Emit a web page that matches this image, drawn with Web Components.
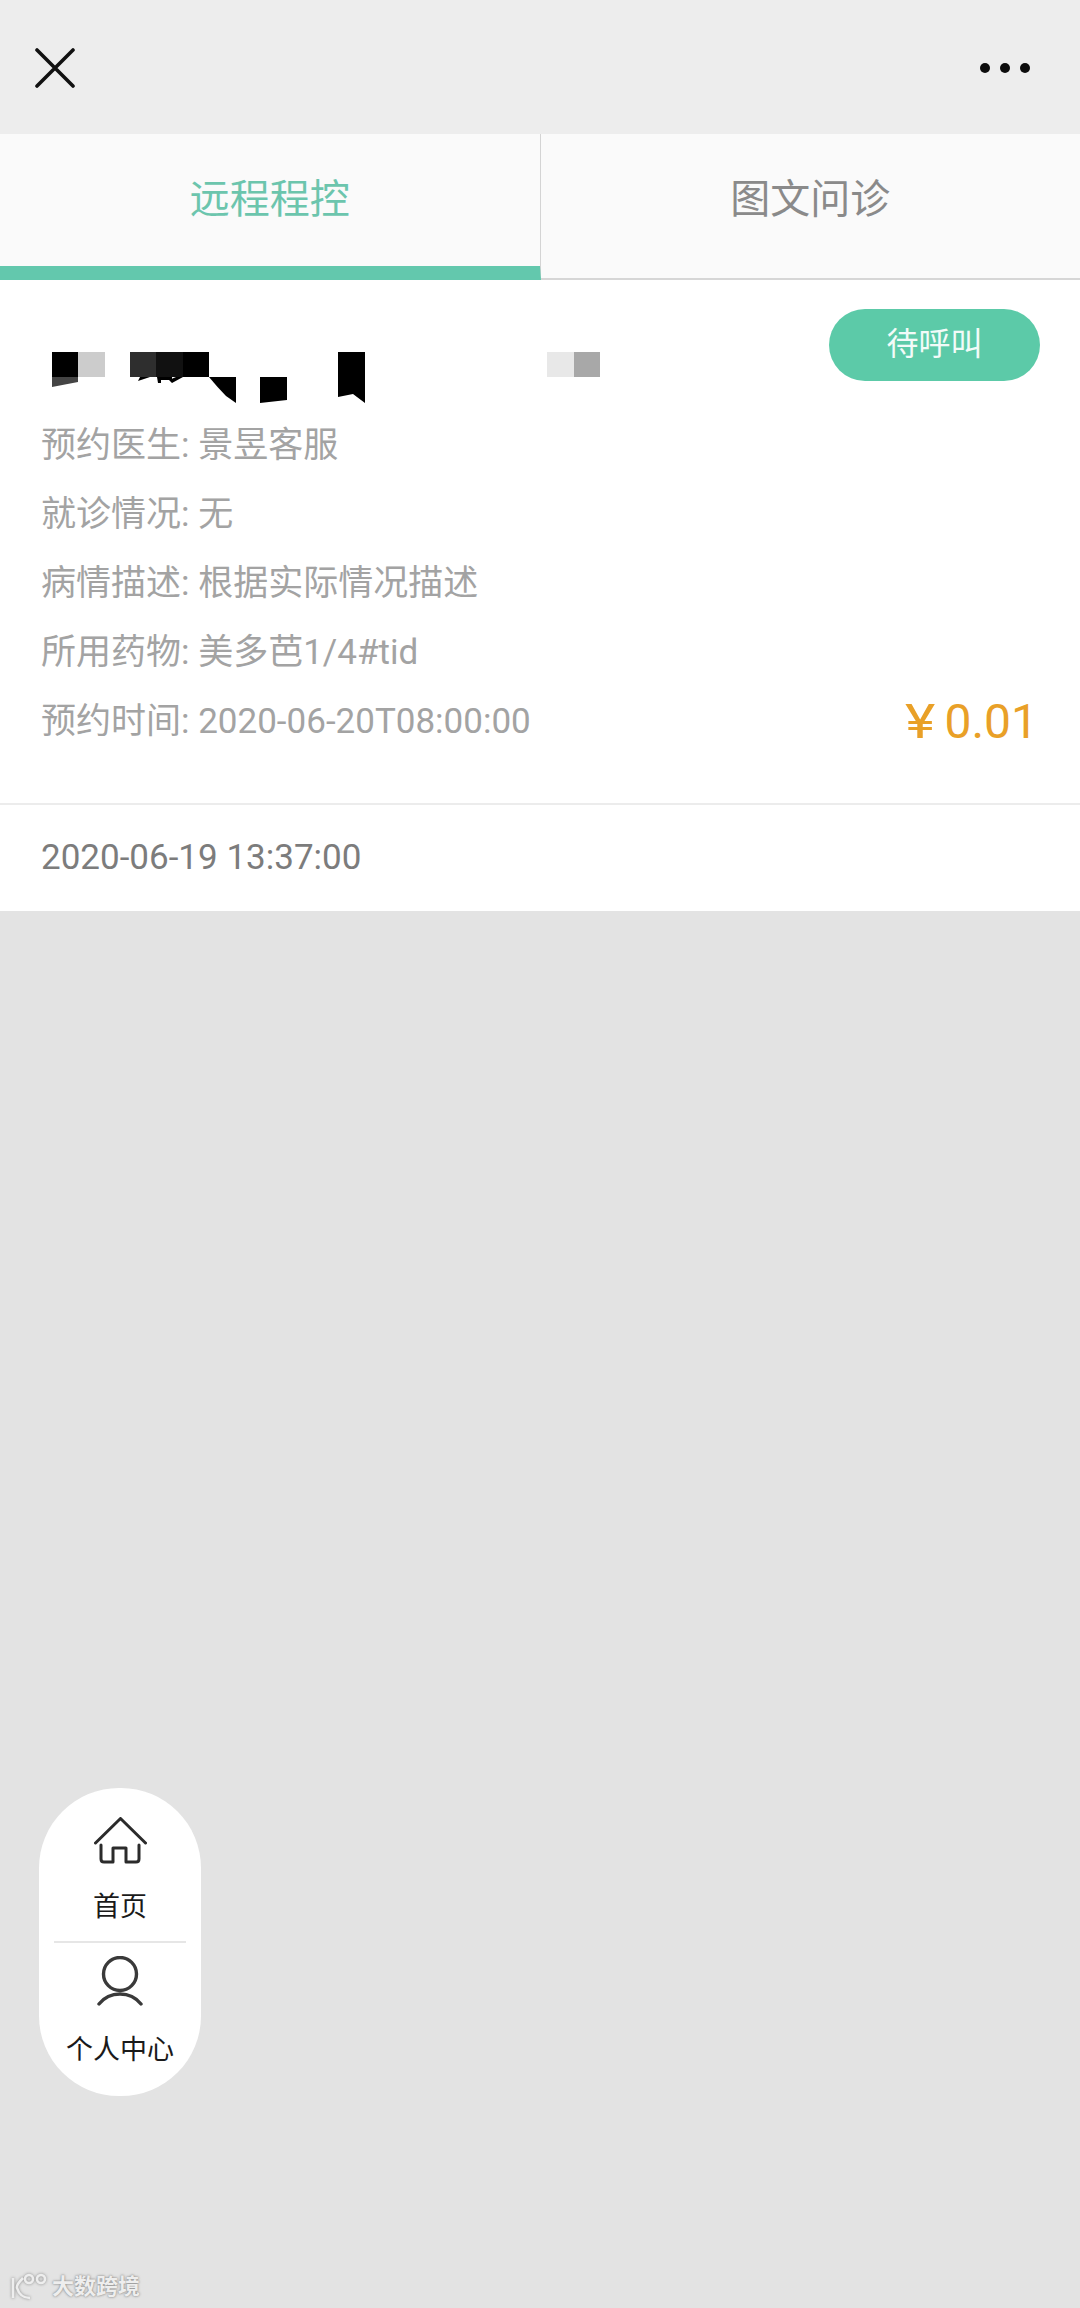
<!DOCTYPE html>
<html lang="zh">
<head>
<meta charset="utf-8">
<title>远程程控</title>
<style>
  html, body { margin: 0; padding: 0; background: #e3e3e3; }
  body { font-family: Roboto, "Noto Sans CJK SC", sans-serif; }
</style>
</head>
<body>
<app-page>
  <top-bar></top-bar>
  <tab-bar>
    <tab-item active>远程程控</tab-item>
    <tab-item>图文问诊</tab-item>
  </tab-bar>
  <order-card status="待呼叫" price="0.01" created="2020-06-19 13:37:00">
    <info-line label="预约医生">景昱客服</info-line>
    <info-line label="就诊情况">无</info-line>
    <info-line label="病情描述">根据实际情况描述</info-line>
    <info-line label="所用药物">美多芭1/4#tid</info-line>
    <info-line label="预约时间">2020-06-20T08:00:00</info-line>
  </order-card>
  <float-nav slot="overlay">
    <nav-item icon="home" style="--pad: 29px; --gap: 23px; --h: 155px">首页</nav-item>
    <nav-item icon="user" style="--pad: 13px; --gap: 24px; --h: 153px">个人中心</nav-item>
  </float-nav>
  <water-mark slot="overlay">大数跨境</water-mark>
</app-page>

<script>
class AppPage extends HTMLElement {
    constructor() {
        super();
        this.attachShadow({ mode: 'open' });
        this.shadowRoot.innerHTML = `
            <style>
                :host {
                    display: block;
                    position: relative;
                    height: 2308px;
                    overflow: hidden;
                    background: #e3e3e3;
                }
            </style>
            <slot></slot>
            <slot name="overlay"></slot>
        `;
    }
}

class TopBar extends HTMLElement {
    constructor() {
        super();
        this.attachShadow({ mode: 'open' });
        this.shadowRoot.innerHTML = `
            <style>
                :host {
                    display: flex;
                    justify-content: space-between;
                    align-items: center;
                    height: 134px;
                    padding: 2px 50px 0 35px;
                    background: #ededed;
                    box-sizing: border-box;
                }
                svg { display: block; }
            </style>
            <svg width="40" height="40" viewBox="0 0 40 40" fill="none" stroke="#111" stroke-width="3.6" stroke-linecap="round">
                <path d="M2 2 L38 38 M38 2 L2 38"/>
            </svg>
            <svg width="50" height="10" viewBox="0 0 50 10" fill="#0c0c0c">
                <circle cx="5" cy="5" r="5"/>
                <circle cx="25" cy="5" r="5"/>
                <circle cx="45" cy="5" r="5"/>
            </svg>
        `;
    }
}

class TabBar extends HTMLElement {
    constructor() {
        super();
        this.attachShadow({ mode: 'open' });
        this.shadowRoot.innerHTML = `
            <style>
                :host {
                    display: flex;
                    height: 146px;
                    background: #fafafa;
                }
            </style>
            <slot></slot>
        `;
    }
}

class TabItem extends HTMLElement {
    constructor() {
        super();
        this.attachShadow({ mode: 'open' });
        this.shadowRoot.innerHTML = `
            <style>
                :host {
                    flex: 1;
                    display: flex;
                    justify-content: center;
                    align-items: center;
                    box-sizing: border-box;
                    padding-bottom: 21px;
                    font-size: 40px;
                    color: #8a8a8a;
                    border-bottom: 2px solid #d6d6d6;
                }
                :host(:first-child) { border-right: 1px solid #d4d4d4; }
                :host([active]) {
                    color: #6cc5ad;
                    border-bottom: 14px solid #63c8ad;
                    padding-bottom: 9px;
                }
            </style>
            <slot></slot>
        `;
    }
}

class OrderCard extends HTMLElement {
    constructor() {
        super();
        this.attachShadow({ mode: 'open' });
        this.shadowRoot.innerHTML = `
            <style>
                :host {
                    display: block;
                    background: #fff;
                }
                .main { padding: 29px 40px 47px 41px; }
                .head {
                    display: flex;
                    justify-content: space-between;
                    align-items: flex-start;
                    height: 102px;
                }
                .name { display: block; margin: 43px 0 0 11px; }
                .status {
                    width: 211px;
                    height: 72px;
                    line-height: 70px;
                    border-radius: 36px;
                    text-align: center;
                    background: #5ccaa8;
                    color: #f2fbf8;
                    font-size: 32px;
                }
                .body {
                    display: flex;
                    justify-content: space-between;
                    align-items: flex-end;
                }
                .price {
                    display: flex;
                    align-items: center;
                    height: 69px;
                    padding-right: 2px;
                    font-size: 48px;
                    color: #e9a027;
                }
                .price span {
                    display: inline-block;
                    margin-right: 9px;
                    transform: scaleX(1.2);
                    transform-origin: right center;
                }
                .price b { font-weight: 400; }
                .foot {
                    height: 108px;
                    line-height: 106px;
                    box-sizing: border-box;
                    padding-left: 41px;
                    border-top: 2px solid #ececec;
                    font-size: 35px;
                    color: #7c7c7c;
                }
            </style>
            <div class="main">
                <div class="head">
                    <svg class="name" width="550" height="51" viewBox="0 0 550 51">
                        <rect x="0" y="0" width="26" height="25" fill="#000"/>
                        <rect x="26" y="0" width="27" height="25" fill="#ccc"/>
                        <path d="M0 25 H26 V30 L0 35 Z" fill="#444"/>
                        <rect x="78" y="0" width="26" height="25" fill="#2e2e2e"/>
                        <rect x="104" y="0" width="27" height="25" fill="#111"/>
                        <rect x="131" y="0" width="26" height="25" fill="#000"/>
                        <path d="M157 25 H184 V51 L174 44 Q166 36 157 25 Z" fill="#000"/>
                        <path d="M208 25 H235 V48 L208 51 Z" fill="#000"/>
                        <path d="M286 0 H313 V51 L301 42 L286 45 Z" fill="#000"/>
                        <path d="M88 25 H98 L86 29 Z M105 25 H120 V28 H109 V31 H106 Z M124 25 H131 L120 31 L117 28 Z" fill="#000"/>
                        <rect x="495" y="0" width="27" height="25" fill="#e8e8e8"/>
                        <rect x="522" y="0" width="26" height="25" fill="#a8a8a8"/>
                    </svg>
                    <div class="status"></div>
                </div>
                <div class="body">
                    <div><slot></slot></div>
                    <div class="price"><span>¥</span><b></b></div>
                </div>
            </div>
            <div class="foot"></div>
        `;
    }

    connectedCallback() {
        const root = this.shadowRoot;
        root.querySelector('.status').textContent = this.getAttribute('status');
        root.querySelector('.price b').textContent = this.getAttribute('price');
        root.querySelector('.foot').textContent = this.getAttribute('created');
    }
}

class InfoLine extends HTMLElement {
    constructor() {
        super();
        this.attachShadow({ mode: 'open' });
        this.shadowRoot.innerHTML = `
            <style>
                :host {
                    display: block;
                    height: 69px;
                    line-height: 69px;
                    font-size: 35px;
                    color: #a3a3a3;
                    white-space: nowrap;
                }
            </style>
            <span id="label"></span>: <slot></slot>
        `;
    }

    connectedCallback() {
        this.shadowRoot.getElementById('label').textContent = this.getAttribute('label');
    }
}

class FloatNav extends HTMLElement {
    constructor() {
        super();
        this.attachShadow({ mode: 'open' });
        this.shadowRoot.innerHTML = `
            <style>
                :host {
                    position: absolute;
                    left: 39px;
                    top: 1788px;
                    width: 162px;
                    height: 308px;
                    border-radius: 80px;
                    background: #fff;
                }
            </style>
            <slot></slot>
        `;
    }
}

const NAV_ICONS = {
    home: `<svg width="53" height="47" viewBox="0 0 53 47" fill="none" stroke="#2b2b2b" stroke-width="3" stroke-linecap="round" stroke-linejoin="round">
        <path d="M1.5 26 L26.5 1.5 L51.5 26"/>
        <path d="M7 28 V42 Q7 45 10 45 H19 V31 H32 V45 H42 Q45 45 45 42 V28"/>
    </svg>`,
    user: `<svg width="46" height="50" viewBox="0 0 46 50" fill="none" stroke="#3a3a3a" stroke-width="3.4" stroke-linecap="round">
        <circle cx="23" cy="18" r="16.5"/>
        <path d="M2 48 Q10 38 23 38 Q36 38 44 48"/>
    </svg>`
};

class NavItem extends HTMLElement {
    constructor() {
        super();
        this.attachShadow({ mode: 'open' });
        this.shadowRoot.innerHTML = `
            <style>
                :host {
                    display: flex;
                    flex-direction: column;
                    align-items: center;
                    height: var(--h, 154px);
                    box-sizing: border-box;
                    padding-top: var(--pad, 20px);
                    position: relative;
                }
                :host(:first-child)::after {
                    content: '';
                    position: absolute;
                    left: 15px;
                    right: 15px;
                    bottom: 0;
                    height: 2px;
                    background: #e6e6e6;
                }
                svg { display: block; }
                .text {
                    margin-top: var(--gap, 20px);
                    line-height: 40px;
                    font-size: 27px;
                    color: #1a1a1a;
                    white-space: nowrap;
                }
            </style>
            <div id="icon"></div>
            <div class="text"><slot></slot></div>
        `;
    }

    connectedCallback() {
        this.shadowRoot.getElementById('icon').innerHTML = NAV_ICONS[this.getAttribute('icon')];
    }
}

class WaterMark extends HTMLElement {
    constructor() {
        super();
        this.attachShadow({ mode: 'open' });
        this.shadowRoot.innerHTML = `
            <style>
                :host {
                    position: absolute;
                    left: 10px;
                    top: 2272px;
                    display: flex;
                    align-items: center;
                    gap: 4px;
                    font-size: 22px;
                    font-weight: 700;
                    line-height: 30px;
                    color: #eeeeee;
                    text-shadow: 0 0 2px #888, 0 0 3px #aaa;
                }
                svg { display: block; filter: drop-shadow(0 0 1.5px #888); }
            </style>
            <svg width="38" height="28" viewBox="0 0 38 28" fill="none" stroke="#eeeeee" stroke-width="2.6">
                <path d="M3 5 V25"/>
                <path d="M13 5 Q6 12 7 15 Q10 25 20 25"/>
                <circle cx="19" cy="6" r="4"/>
                <circle cx="31" cy="6" r="4"/>
            </svg>
            <slot></slot>
        `;
    }
}

customElements.define('app-page', AppPage);
customElements.define('top-bar', TopBar);
customElements.define('tab-bar', TabBar);
customElements.define('tab-item', TabItem);
customElements.define('order-card', OrderCard);
customElements.define('info-line', InfoLine);
customElements.define('float-nav', FloatNav);
customElements.define('nav-item', NavItem);
customElements.define('water-mark', WaterMark);
</script>
</body>
</html>
